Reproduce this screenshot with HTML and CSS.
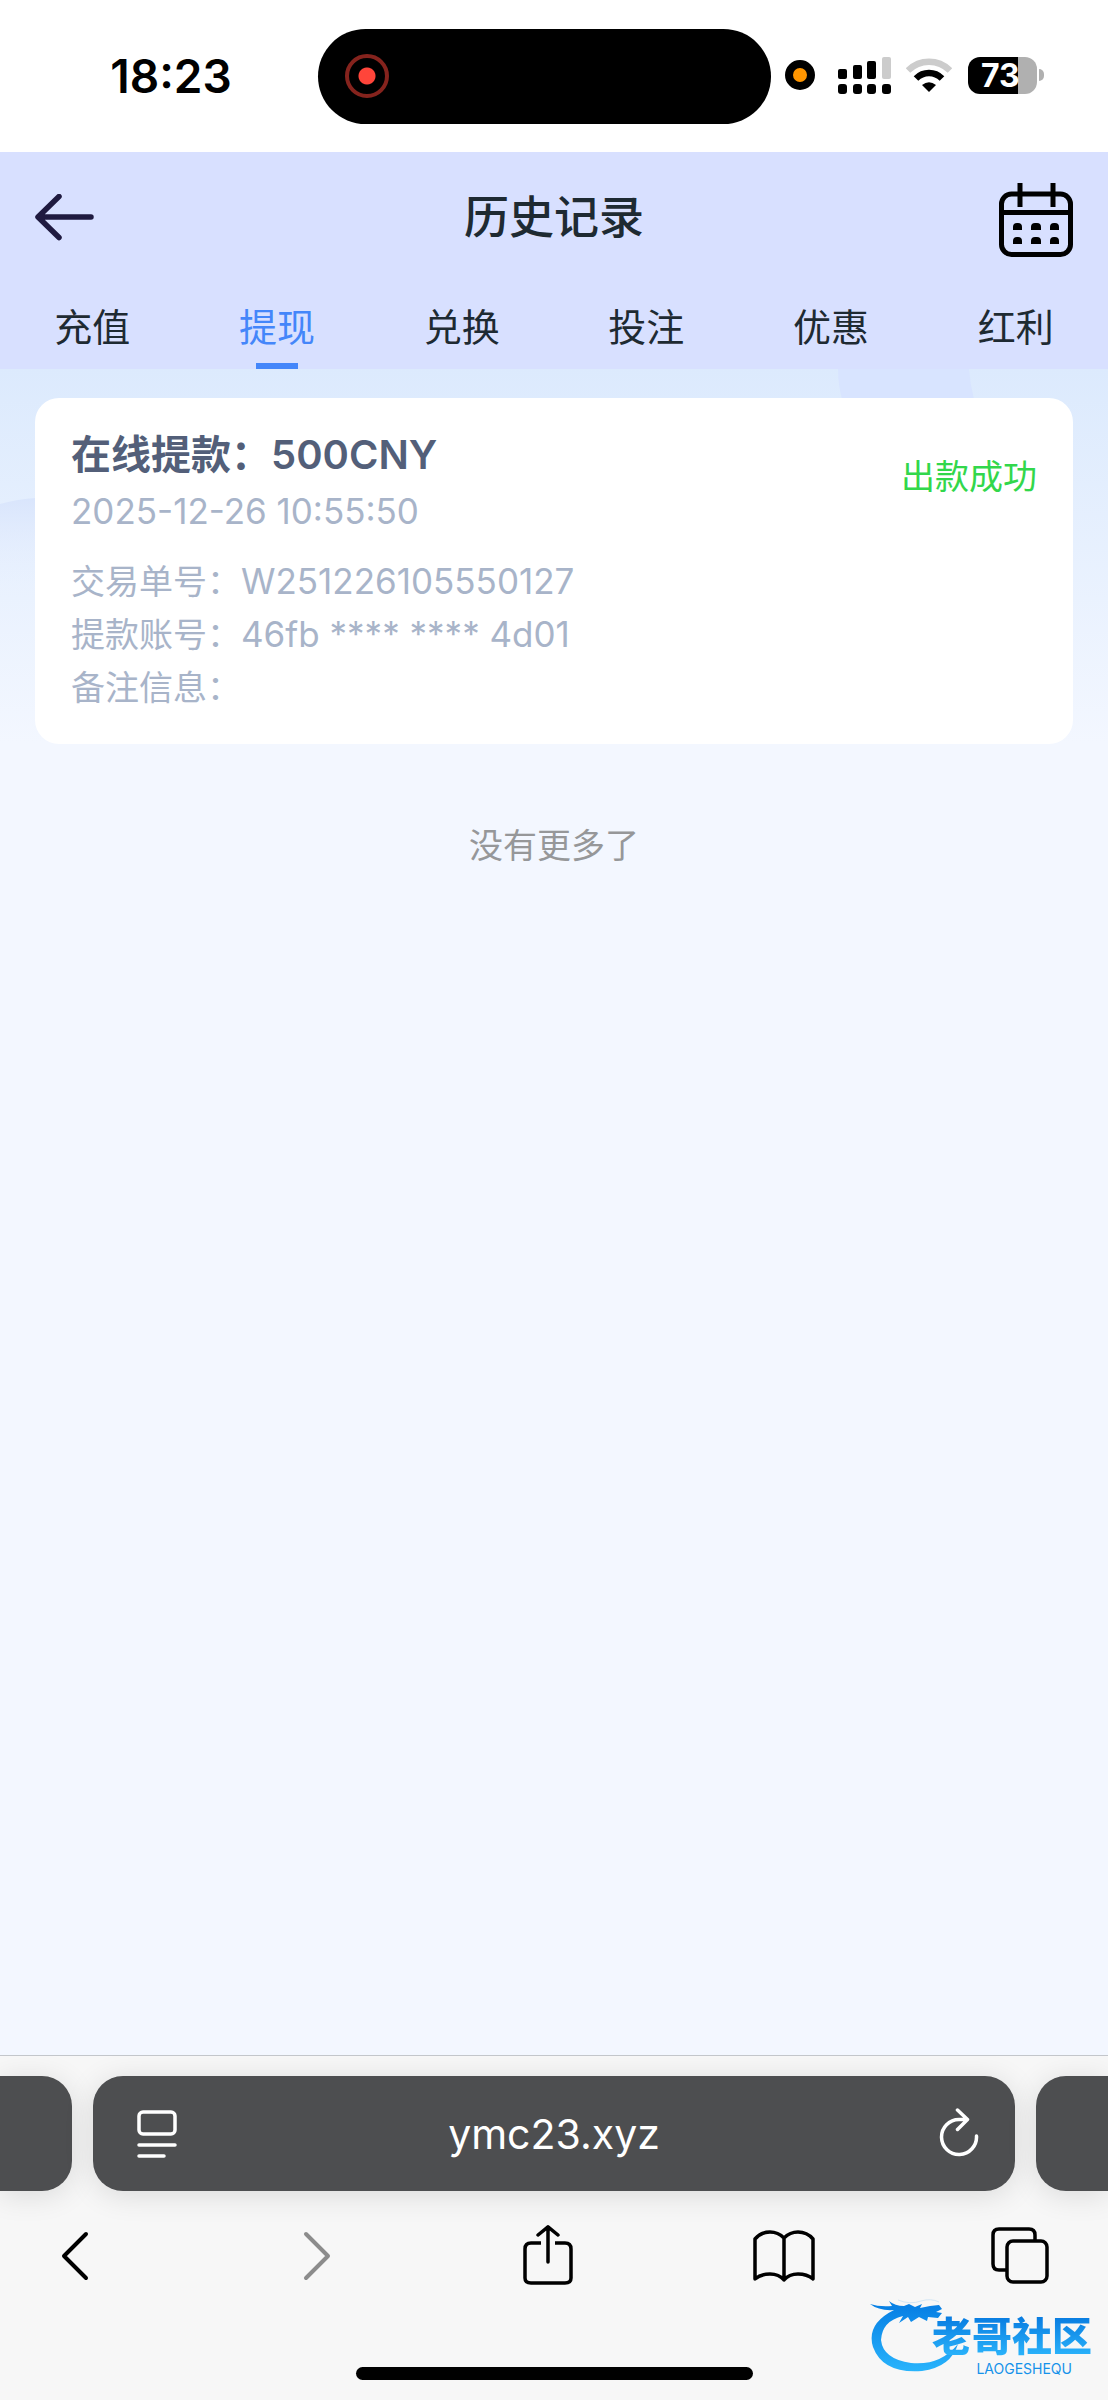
FILE: index.html
```html
<!DOCTYPE html>
<html lang="zh-CN">
<head>
    <meta charset="UTF-8">
    <meta name="viewport" content="width=device-width, initial-scale=1.0">
    <title>历史记录</title>
    <link rel="stylesheet" href="styles.css">
</head>
<body>
    <div class="statusbar">
        <div class="time">18:23</div>
        <div class="island"><span class="rec"></span></div>
        <div class="status-icons">
            <span class="mic"></span>
            <svg class="signal" width="54" height="37" viewBox="0 0 54 37">
                <rect x="0" y="12" width="9" height="10" rx="2"/>
                <rect x="15" y="8" width="9" height="14" rx="2"/>
                <rect x="29" y="4" width="9" height="18" rx="2"/>
                <rect x="44" y="0" width="9" height="22" rx="2" fill="#ccc"/>
                <rect x="0" y="27" width="9" height="10" rx="3"/>
                <rect x="15" y="27" width="9" height="10" rx="3"/>
                <rect x="29" y="27" width="9" height="10" rx="3"/>
                <rect x="44" y="27" width="9" height="10" rx="3"/>
            </svg>
            <svg class="wifi" width="46" height="34" viewBox="0 0 46 34">
                <path d="M2 12.500Q11 3.800 23 3.800T44 12.500" fill="none" stroke="#ccc" stroke-width="6.500"/>
                <path d="M10 20.500Q15.500 15 23 15T36 20.500" fill="none" stroke="#000" stroke-width="6.500"/>
                <path d="M16 27Q23 21.500 30 27L23 34Z"/>
            </svg>
            <div class="battery"><span>73</span></div>
            <i class="battery-cap"></i>
        </div>
    </div>

    <header>
        <div class="topbar">
            <button class="icon-btn" aria-label="返回">
                <svg width="60" height="48" viewBox="0 0 60 48" fill="none" stroke="#1f1a40" stroke-width="5.500" stroke-linecap="round" stroke-linejoin="round">
                    <path d="M24 2.500L3 23L24 43.500M4 23H56"/>
                </svg>
            </button>
            <h1>历史记录</h1>
            <button class="icon-btn" aria-label="选择日期">
                <svg width="74" height="78" viewBox="0 -4 74 78">
                    <rect x="2.500" y="11" width="69" height="60.500" rx="10" fill="none" stroke="#000" stroke-width="5"/>
                    <path d="M3 29.500H71M21 0V24M54 0V24" fill="none" stroke="#000" stroke-width="5"/>
                    <path d="M14 47v-3q0-4 4-4h1q4 0 4 4v3zM32 47v-3q0-4 4-4h2q4 0 4 4v3zM51 47v-3q0-4 4-4h1q4 0 4 4v3zM14 61v-3q0-4 4-4h1q4 0 4 4v3zM32 61v-3q0-4 4-4h2q4 0 4 4v3zM51 61v-3q0-4 4-4h1q4 0 4 4v3z"/>
                </svg>
            </button>
        </div>
        <nav class="tabs">
            <a href="#">充值</a>
            <a href="#" class="active">提现</a>
            <a href="#">兑换</a>
            <a href="#">投注</a>
            <a href="#">优惠</a>
            <a href="#">红利</a>
        </nav>
    </header>

    <main>
        <svg class="shapes" viewBox="0 0 1108 375" preserveAspectRatio="none" aria-hidden="true">
            <defs>
                <linearGradient id="fade" x1="0" y1="0" x2="0" y2="1">
                    <stop offset="0" stop-color="#d9e5fc"/>
                    <stop offset="1" stop-color="#e8effe" stop-opacity="0"/>
                </linearGradient>
            </defs>
            <path d="M0 135Q18 130 36 129V220H0Z" fill="url(#fade)"/>
            <path d="M838 0H969Q970 15 974 30H842Q838 15 838 0Z" fill="#d8e4ff"/>
        </svg>
        <section class="card">
            <div class="card-head">
                <div>
                    <h2>在线提款：500CNY</h2>
                    <p class="value">2025-12-26 10:55:50</p>
                </div>
                <span class="state">出款成功</span>
            </div>
            <p>交易单号：<span class="value">W251226105550127</span></p>
            <p>提款账号：<span class="value">46fb **** **** 4d01</span></p>
            <p>备注信息：</p>
        </section>
        <p class="no-more">没有更多了</p>
    </main>

    <footer>
        <div class="address-row">
            <div class="side-tab side-left"></div>
            <div class="address">
                <button class="icon-btn" aria-label="页面菜单">
                    <svg width="40" height="48" viewBox="0 0 40 48" fill="none" stroke="#fff" stroke-width="3.500" stroke-linecap="round">
                        <rect x="2" y="2" width="36" height="22" rx="4"/>
                        <path d="M2 35H38M2 46H27"/>
                    </svg>
                </button>
                <input type="text" value="ymc23.xyz" aria-label="地址">
                <button class="icon-btn" aria-label="刷新">
                    <svg width="40" height="52" viewBox="0 0 40 52" fill="none" stroke="#fff" stroke-width="3.500" stroke-linecap="round" stroke-linejoin="round">
                        <path d="M28 11.500H20A17.500 17.500 0 1 0 37.500 28M18.500 2L28.500 11.500L18.500 21.500"/>
                    </svg>
                </button>
            </div>
            <div class="side-tab side-right"></div>
        </div>
        <div class="toolbar">
            <button class="icon-btn" aria-label="后退">
                <svg width="28" height="62" viewBox="0 0 28 62" fill="none" stroke="#000" stroke-width="4" stroke-linecap="round" stroke-linejoin="round"><path d="M25 9L3 31L25 53"/></svg>
            </button>
            <button class="icon-btn" aria-label="前进">
                <svg width="40" height="62" viewBox="0 0 40 62" fill="none" stroke="#8c8c8c" stroke-width="4" stroke-linecap="round" stroke-linejoin="round"><path d="M15 9L37 31L15 53"/></svg>
            </button>
            <button class="icon-btn" aria-label="分享">
                <svg width="50" height="62" viewBox="0 0 50 62" fill="none" stroke="#000" stroke-width="3.500" stroke-linecap="round" stroke-linejoin="round">
                    <path stroke-linecap="butt" d="M18 18H8Q2 18 2 24V53Q2 58 8 58H42Q48 58 48 53V24Q48 18 42 18H32"/>
                    <path d="M25 37V2M15 10L25 1.800L35 10"/>
                </svg>
            </button>
            <button class="icon-btn" aria-label="书签">
                <svg width="62" height="62" viewBox="0 0 62 62" fill="none" stroke="#000" stroke-width="3.500" stroke-linecap="round" stroke-linejoin="round">
                    <path d="M31 13Q25 7 17 7Q8 7 2 14V54Q8 49 17 49Q26 49 31 55Q36 49 45 49Q54 49 60 54V14Q54 7 45 7Q37 7 31 13V55"/>
                </svg>
            </button>
            <button class="icon-btn" aria-label="标签页">
                <svg width="58" height="62" viewBox="0 0 58 62" fill="none" stroke="#000" stroke-width="3.500">
                    <path d="M44 16V10Q44 4 38 4H8Q2 4 2 10V39Q2 45 8 45H15"/>
                    <rect x="16" y="16" width="40" height="41" rx="6"/>
                </svg>
            </button>
        </div>
        <div class="home-indicator"></div>
        <div class="logo">
            <svg width="92" height="76" viewBox="0 0 92 76" fill="url(#blue)">
                <defs>
                    <linearGradient id="blue" x1="0" y1="0" x2="0" y2="1">
                        <stop offset=".1" stop-color="#0881e5"/>
                        <stop offset="1" stop-color="#29b4fc"/>
                    </linearGradient>
                </defs>
                <path d="M0 6Q9 9 22 8L19 3Q25 8 34 8L39 6L45 9L52 6L50 10L60 8L69 7L72 11L66 14L72 15L68 20L58 19L57 23L49 19L41 24L38 19L29 25L33 18Q12 23 11 42Q13 61 41 65Q70 68 88 46Q81 69 52 73Q13 76 3 49Q-4 26 24 12Q9 13 0 6Z"/>
                <path d="M28 2Q40 7 51 3Q61 0 69 4" fill="none" stroke="#d3e6f5" stroke-width="1"/>
            </svg>
            <div class="logo-text">
                <strong>老哥社区</strong>
                <span>LAOGESHEQU</span>
            </div>
        </div>
    </footer>
</body>
</html>
```
FILE: styles.css
```css
* { box-sizing: border-box; }
body { margin: 0; min-height: 100vh; display: flex; flex-direction: column; background-color: #f3f7ff; font-family: Inter, "Noto Sans CJK SC", sans-serif; }
h1, h2, p { margin: 0; }
svg { display: block; }
.icon-btn { background: none; border: none; padding: 0; cursor: pointer; }

/* phone status bar */
.statusbar { background-color: white; height: 152px; display: grid; grid-template-columns: 318px 453px 1fr; align-items: center; }
.time { padding-left: 24px; text-align: center; font-size: 46px; font-weight: 600; }
.island { height: 95px; border-radius: 48px; background-color: black; display: flex; align-items: center; padding-left: 27px; }
.rec { width: 44px; height: 44px; border: 4px solid #85231d; border-radius: 50%; background: radial-gradient(circle, #ff453a 8px, transparent 9px); }
.status-icons { display: flex; align-items: center; padding: 0 0 2px 14px; }
.mic { width: 30px; height: 30px; border: 8px solid black; border-radius: 50%; background-color: #ff9500; margin-right: 23px; }
.signal { margin-right: 14px; }
.wifi { margin-right: 16px; }
.battery { width: 69px; height: 37px; border-radius: 12px; background: linear-gradient(to right, #000 50px, #b0b0b0 50px); color: white; font-size: 32px; font-weight: 700; line-height: 37px; padding-left: 13px; }
.battery-cap { width: 5px; height: 12px; margin-left: 2px; border-radius: 0 5px 5px 0; background-color: #b0b0b0; }

/* page header */
header { background-color: #d8e0ff; }
.topbar { display: grid; grid-template-columns: 74px 1fr 74px; align-items: center; height: 132px; padding: 0 35px; }
.topbar h1 { color: #1e2a32; font-size: 45px; font-weight: 500; line-height: 64px; text-align: center; }
.tabs { display: flex; }
.tabs a { flex: 1; display: flex; flex-direction: column; align-items: center; height: 85px; color: #1e2a32; font-size: 38px; line-height: 86px; text-decoration: none; }
.tabs .active { color: #4486fa; }
.active::after { content: ""; width: 42px; height: 6px; margin-top: -7px; background-color: #4486fa; }

/* records */
main { position: relative; flex: 1; padding: 29px 35px; background: linear-gradient(#dceafd, #f3f7ff 375px); }
.shapes { position: absolute; top: 0; left: 0; width: 100%; height: 375px; }
.card { position: relative; background-color: white; border-radius: 24px; padding: 27px 36px 30px; color: #a8b4c9; font-size: 34px; line-height: 53px; }
.card-head { display: flex; justify-content: space-between; align-items: center; margin-bottom: 17px; }
.card h2 { color: #535f79; font-size: 40px; font-weight: 600; line-height: 60px; }
.value { font-size: 35px; }
.state { padding-bottom: 10px; color: #32d74b; }
.no-more { padding-top: 75px; text-align: center; color: #969799; font-size: 34px; line-height: 53px; }

/* browser bar */
footer { position: relative; background-color: #f7f7f7; border-top: 1px solid #c3c6cb; padding: 20px 0; overflow: hidden; }
.address-row { display: flex; gap: 21px; }
.side-tab, .address { height: 115px; background-color: #4d4e50; box-shadow: 0 4px 30px rgba(0,0,0,0.12); }
.side-tab { width: 72px; }
.side-left { border-radius: 0 30px 30px 0; }
.side-right { border-radius: 30px 0 0 30px; }
.address { flex: 1; min-width: 0; border-radius: 30px; display: flex; align-items: center; padding: 0 36px 0 44px; }
.address input { flex: 1; min-width: 0; background: none; border: none; padding: 0 8px 0 0; color: white; font-family: Inter, sans-serif; font-size: 41px; text-align: center; }
.toolbar { display: flex; justify-content: space-between; padding: 34px 57px 0 44px; }
.toolbar .icon-btn { width: 62px; display: flex; justify-content: center; }
.home-indicator { width: 397px; height: 13px; margin: 80px auto 0; border-radius: 7px; background-color: black; }
.logo { position: absolute; right: 16px; bottom: 24px; display: flex; }
.logo-text { margin-left: -30px; padding-top: 18px; display: flex; flex-direction: column; align-items: flex-end; color: #1592ea; }
.logo-text strong { font-size: 40px; font-weight: 900; line-height: 42px; background: linear-gradient(#087be0, #2cb6fc); -webkit-background-clip: text; color: transparent; }
.logo-text span { margin-top: 4px; padding-right: 20px; font-size: 14px; line-height: 14px; }
```
